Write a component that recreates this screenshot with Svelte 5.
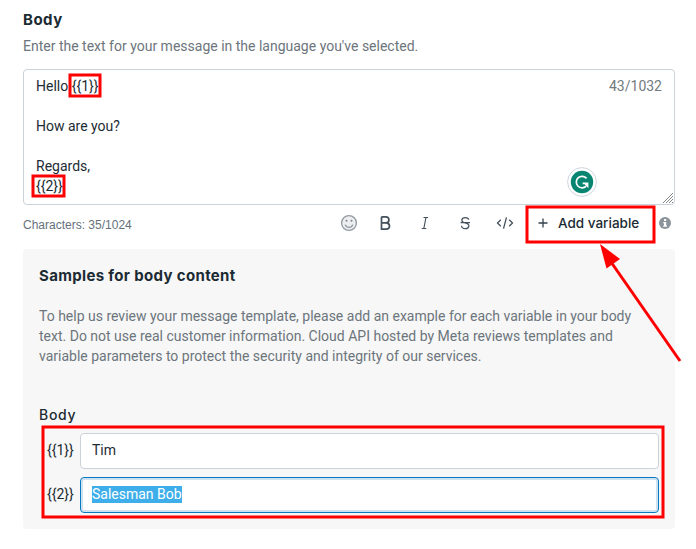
<script>
  let samples = [
    { key: '{{1}}', value: 'Tim', active: false },
    { key: '{{2}}', value: 'Salesman Bob', active: true }
  ];
  const marks = [
    { x: 70, y: 75, w: 30, h: 21 },
    { x: 33, y: 176, w: 31, h: 20 },
    { x: 527, y: 207, w: 127, h: 35 },
    { x: 43, y: 427, w: 620, h: 90 }
  ];
</script>

<main>
  <h2>Body</h2>
  <p class="hint">Enter the text for your message in the language you've selected.</p>

  <div class="editor">
    <div class="message">{'Hello {{1}}\n\nHow are you?\n\nRegards,\n{{2}}'}</div>
    <span class="count">43/1032</span>
    <svg class="assistant" width="30" height="30" viewBox="0 0 30 30">
      <circle cx="15" cy="15" r="14.4" fill="#fff" stroke="#cfd5de" />
      <circle cx="15" cy="15" r="11.2" fill="#078571" />
      <path d="M19.6 11.4A5.8 5.8 0 1 0 19.2 19.2" fill="none" stroke="#fff" stroke-width="1.7" />
      <path d="M15.6 15.6H21.4V21.2L19.2 19L17.6 17.2H15.6Z" fill="#fff" />
    </svg>
    <svg class="grip" width="12" height="12" viewBox="0 0 12 12">
      <path d="M1 11L11 1M4 11L11 4M7 11L11 7M10 11L11 10" stroke="#777b7e" stroke-width=".9" />
    </svg>
  </div>

  <div class="toolbar">
    <span class="chars">Characters: 35/1024</span>
    <svg class="tools" width="180" height="30" viewBox="340 209 180 30" fill="none" stroke="#44505b" stroke-width="1.3">
      <g stroke="#9299a0">
        <circle cx="349" cy="223" r="7.4" fill="#eceef0" />
        <path d="M345.2 224.6Q346.2 227.4 349 227.4Q351.8 227.4 352.8 224.6" />
        <circle cx="346.5" cy="220.8" r="1" fill="#7d858c" stroke="none" />
        <circle cx="351.5" cy="220.8" r="1" fill="#7d858c" stroke="none" />
      </g>
      <path d="M381.5 216.8V229.2H386.1Q389.5 229.2 389.5 226.1Q389.5 223 386.1 222.9H381.5M381.5 216.8H385.8Q388.9 216.8 388.9 219.9Q388.9 222.9 385.8 222.9" stroke-width="1.7" />
      <path d="M423.5 217.5H428.1M421.7 228.5H426.3M426 217.5L423.8 228.5" stroke-width="1.15" />
      <path d="M468.8 219.7Q468.4 217.6 465.3 217.6Q462 217.6 461.8 220.2Q461.7 222 465.2 222.8Q469 223.8 468.9 225.9Q468.6 228.7 465.4 228.7Q461.7 228.7 461.5 225.8M460.6 222.6H470" stroke-width="1.2" />
      <path d="M500.8 219.8L497.5 223L500.8 226.2M509.2 219.8L512.5 223L509.2 226.2M506.5 217.3L503.5 228.7" />
    </svg>
    <button class="add">
      <svg width="10" height="10" viewBox="0 0 10 10"><path d="M5 .5V9.5M.5 5H9.5" stroke="#35414c" stroke-width="1.3" /></svg>
      <span>Add variable</span>
    </button>
    <svg class="info" width="12" height="12" viewBox="0 0 12 12">
      <circle cx="6" cy="6" r="6" fill="#8b939b" />
      <path d="M5 2H7.2V4H5ZM4.2 5H7.2V8.5H8V9.7H4.2V8.5H5V6.2H4.2Z" fill="#fff" />
    </svg>
  </div>

  <section>
    <h3>Samples for body content</h3>
    <p class="help">To help us review your message template, please add an example for each variable in your body<br />text. Do not use real customer information. Cloud API hosted by Meta reviews templates and<br />variable parameters to protect the security and integrity of our services.</p>
    <h4>Body</h4>
    {#each samples as sample}
      <div class="row">
        <span class="key">{sample.key}</span>
        <div class="field" class:active={sample.active}><span>{sample.value}</span></div>
      </div>
    {/each}
  </section>

  <svg class="annotations" width="696" height="549" viewBox="0 0 696 549">
    {#each marks as m}
      <rect x={m.x} y={m.y} width={m.w} height={m.h} fill="none" stroke="#f00" stroke-width="3" />
    {/each}
    <path d="M680 361L611 262" stroke="#f00" stroke-width="3" />
    <path d="M600 244L620 259L606.5 268.5Z" fill="#f00" />
  </svg>
</main>

<style>
  :global(body) { margin: 0; background: #fff; }
  main {
    position: relative;
    box-sizing: border-box;
    width: 696px;
    height: 549px;
    padding: 10px 21px 0 23px;
    overflow: hidden;
    font: 14px/20px Roboto, sans-serif;
    color: #1c2b33;
  }
  h2, h3, h4, p { margin: 0; }
  h2, h3, h4 { font-family: Inter, sans-serif; line-height: 20px; }
  h2 { font-size: 15px; font-weight: 700; letter-spacing: .5px; }
  .hint { margin-top: 6px; color: #6c757c; white-space: nowrap; }
  .editor {
    position: relative;
    display: flex;
    justify-content: space-between;
    box-sizing: border-box;
    height: 136px;
    margin-top: 13px;
    padding: 6px 12px;
    border: 1px solid #cbd2d9;
    border-radius: 4px;
  }
  .message { white-space: pre; }
  .count { color: #737a80; }
  .assistant { position: absolute; left: 543px; top: 97px; }
  .grip { position: absolute; right: 0; bottom: 0; }
  .toolbar { display: flex; align-items: center; height: 36px; margin-top: 1px; }
  .chars { width: 317px; padding-top: 1px; box-sizing: border-box; font: 12px/20px "Liberation Sans", sans-serif; color: #65717a; }
  .tools { flex: none; }
  .add {
    display: flex;
    align-items: center;
    gap: 10px;
    width: 120px;
    height: 34px;
    padding: 0 0 2px;
    margin-left: 18px;
    border: 0;
    background: none;
    color: #1c2b33;
    font: 500 13.5px/20px Inter, sans-serif;
    white-space: nowrap;
  }
  .info { margin: 0 0 3px 1px; flex: none; }
  section {
    box-sizing: border-box;
    height: 280px;
    margin-top: 7px;
    padding: 17px 16px 0;
    border-radius: 4px;
    background: #f7f7f7;
  }
  h3 { font-size: 15px; font-weight: 700; letter-spacing: .34px; }
  .help { margin-top: 20px; color: #6c757c; white-space: nowrap; }
  h4 { margin: 39px 0 8px; font-size: 14px; font-weight: 500; letter-spacing: .7px; }
  .row { display: flex; align-items: center; height: 36px; margin-bottom: 8px; }
  .key { width: 33px; padding: 0 0 2px 8px; }
  .field {
    display: flex;
    align-items: center;
    box-sizing: border-box;
    width: 579px;
    height: 36px;
    padding: 0 11px 2px;
    border: 1px solid #cbd2d9;
    border-radius: 4px;
    background: #fff;
  }
  .active { border-color: #0a78be; box-shadow: inset 0 0 0 2px #cee3f2; }
  .active span { color: #fff; background: #3daee9; line-height: 17px; }
  .annotations { position: absolute; inset: 0; pointer-events: none; }
</style>
